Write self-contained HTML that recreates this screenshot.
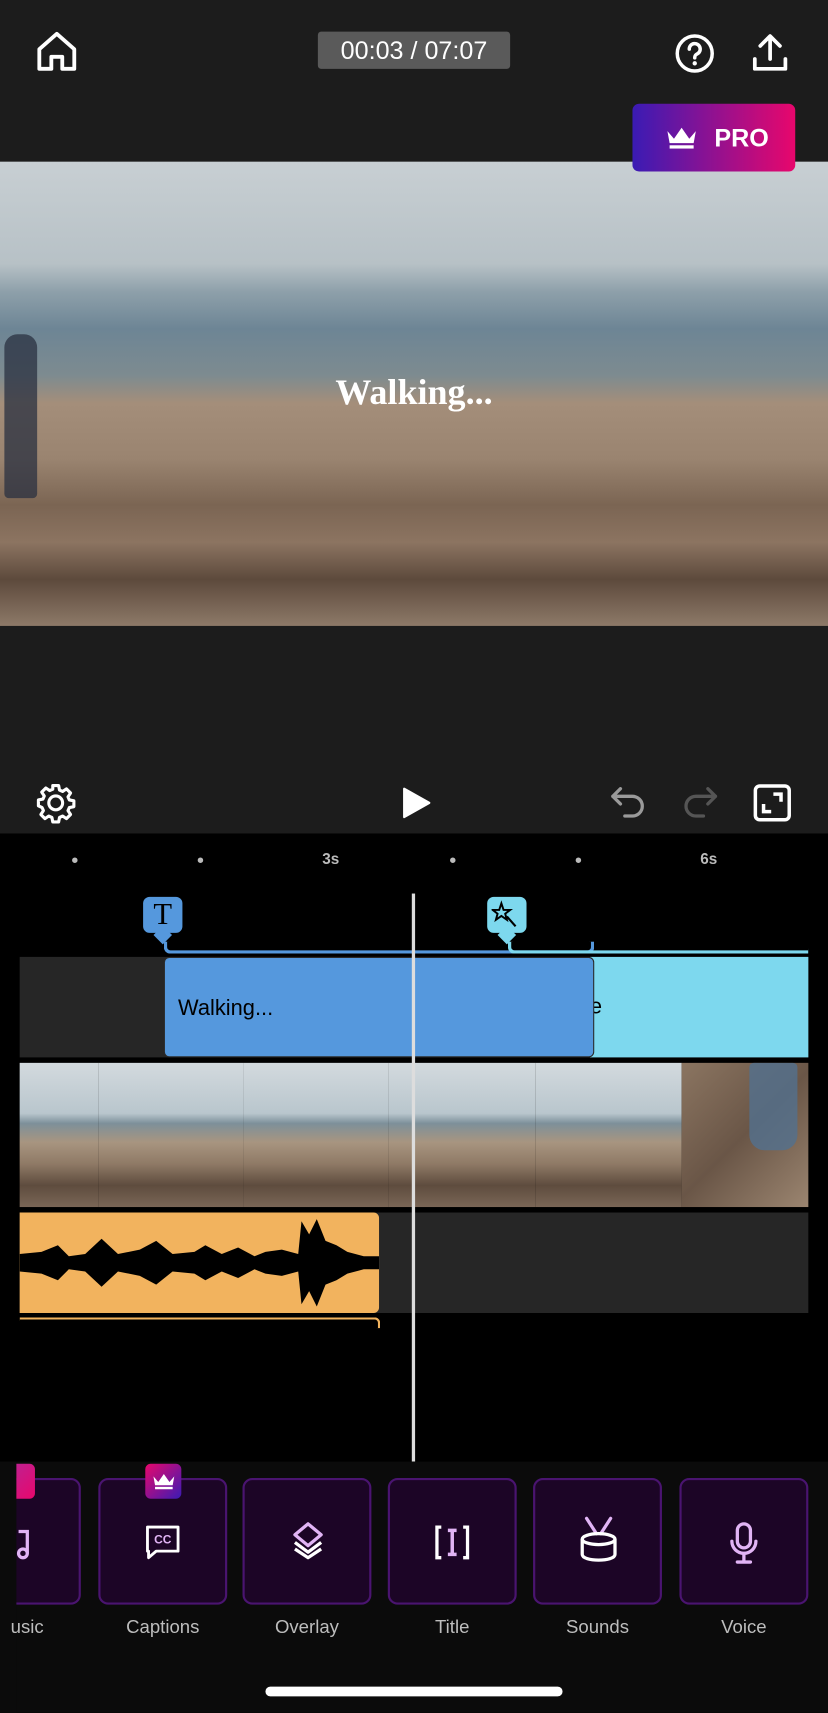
<!DOCTYPE html>
<html><head><meta charset="utf-8"><style>
*{margin:0;padding:0;box-sizing:border-box}
html,body{width:828px;height:1713px;overflow:hidden;background:#000}
#w{width:758px;height:1568px;transform:scale(1.09235);transform-origin:0 0;position:relative;background:#000;font-family:"Liberation Sans",sans-serif}
.a{position:absolute}
.tile{position:absolute;top:1353px;width:118px;height:116px;background:#1c0526;border:2px solid #4a1470;border-radius:9px}
.lbl{position:absolute;top:1480px;width:118px;text-align:center;color:#bdbdbd;font-size:17px}
.frame{position:absolute;top:973px;height:132px;background:linear-gradient(#d3dade 0%,#b9c6cd 35%,#7d909a 42%,#a89580 55%,#8f7a66 70%,#5e4c3e 85%,#7a6656 100%)}
</style></head><body><div id="w">
<div class="a" style="left:0;top:0;width:758px;height:763px;background:#1c1c1c"></div>
<svg class="a" style="left:32px;top:28px" width="40" height="38" viewBox="0 0 40 38"><path d="M4 17 L20 3 L36 17 V35 H25 V24 H15 V35 H4 Z" fill="none" stroke="#fff" stroke-width="3.5" stroke-linejoin="round"/></svg>
<div class="a" style="left:291px;top:29px;width:176px;height:34px;background:#5a5a5a;border-radius:3px;color:#fff;font-size:23px;text-align:center;line-height:34px">00:03 / 07:07</div>
<svg class="a" style="left:617px;top:30px" width="38" height="38" viewBox="0 0 38 38"><circle cx="19" cy="19" r="16" fill="none" stroke="#fff" stroke-width="3.2"/><path d="M14 15 a5 5 0 1 1 7 4.5 c-1.5 .8-2 1.5-2 3.5" fill="none" stroke="#fff" stroke-width="3.2" stroke-linecap="round"/><circle cx="19" cy="28" r="2" fill="#fff"/></svg>
<svg class="a" style="left:688px;top:30px" width="34" height="36" viewBox="0 0 34 36"><path d="M17 24 V4 M8 12 L17 3 L26 12 M3 24 V33 H31 V24" fill="none" stroke="#fff" stroke-width="3.4" stroke-linecap="round" stroke-linejoin="round"/></svg>
<!-- video -->
<div class="a" style="left:0;top:148px;width:758px;height:425px;background:linear-gradient(#c8cfd3 0%,#b7c1c6 22%,#8ea0aa 28%,#6d8595 36%,#7d8b90 46%,#a48e7a 52%,#9a8470 64%,#7b6553 74%,#8c7461 82%,#5d4a3c 90%,#8d7968 100%)"></div>
<div class="a" style="left:4px;top:306px;width:30px;height:150px;background:#2a3040;border-radius:12px 12px 4px 4px;opacity:.75"></div>
<div class="a" style="left:0;top:342px;width:758px;text-align:center;color:#fff;font-family:'Liberation Serif',serif;font-size:33px;font-weight:bold">Walking...</div>
<div class="a" style="left:579px;top:95px;width:149px;height:62px;border-radius:6px;background:linear-gradient(90deg,#3a1bb4,#e8076c);color:#fff;font-weight:bold;font-size:23px;line-height:62px;padding-left:75px">PRO</div>
<svg class="a" style="left:609px;top:114px" width="30" height="24" viewBox="0 0 30 24"><path d="M2 6 L8 13 L15 3 L22 13 L28 6 L26 17 H4 Z" fill="#fff"/><rect x="4" y="19" width="22" height="3" fill="#fff"/></svg>
<!-- controls -->
<svg class="a" style="left:32px;top:716px" width="38" height="38" viewBox="0 0 24 24"><path d="M12 8a4 4 0 1 0 0 8a4 4 0 0 0 0-8z M10.3 2h3.4l.5 2.6 1.8.8 2.2-1.5 2.4 2.4-1.5 2.2.8 1.8 2.6.5v3.4l-2.6.5-.8 1.8 1.5 2.2-2.4 2.4-2.2-1.5-1.8.8-.5 2.6h-3.4l-.5-2.6-1.8-.8-2.2 1.5-2.4-2.4 1.5-2.2-.8-1.8L2 13.7v-3.4l2.6-.5.8-1.8-1.5-2.2 2.4-2.4 2.2 1.5 1.8-.8z" fill="none" stroke="#fff" stroke-width="1.8" stroke-linejoin="round"/></svg>
<svg class="a" style="left:367px;top:720px" width="28" height="30" viewBox="0 0 28 30"><path d="M3 2 L26 15 L3 28 Z" fill="#fff" stroke="#fff" stroke-width="2" stroke-linejoin="round"/></svg>
<svg class="a" style="left:558px;top:718px" width="34" height="32" viewBox="0 0 34 32"><path d="M10 4 L3 11 L10 18 M3 11 H21 a9 9 0 0 1 0 18 H14" fill="none" stroke="#9a9a9a" stroke-width="3" stroke-linecap="round" stroke-linejoin="round"/></svg>
<svg class="a" style="left:624px;top:718px" width="34" height="32" viewBox="0 0 34 32"><path d="M24 4 L31 11 L24 18 M31 11 H13 a9 9 0 0 0 0 18 H20" fill="none" stroke="#555" stroke-width="3" stroke-linecap="round" stroke-linejoin="round"/></svg>
<svg class="a" style="left:689px;top:717px" width="36" height="36" viewBox="0 0 36 36"><rect x="2.5" y="2.5" width="31" height="31" rx="4" fill="none" stroke="#fff" stroke-width="3.2"/><path d="M19 10 H26 V17 M17 26 H10 V19" fill="none" stroke="#fff" stroke-width="3.2"/></svg>
<!-- ruler -->
<div class="a" style="left:66px;top:785px;width:5px;height:5px;border-radius:50%;background:#bbb"></div>
<div class="a" style="left:181px;top:785px;width:5px;height:5px;border-radius:50%;background:#bbb"></div>
<div class="a" style="left:412px;top:785px;width:5px;height:5px;border-radius:50%;background:#bbb"></div>
<div class="a" style="left:527px;top:785px;width:5px;height:5px;border-radius:50%;background:#bbb"></div>
<div class="a" style="left:295px;top:778px;color:#bbb;font-size:14px;font-weight:bold">3s</div>
<div class="a" style="left:641px;top:778px;color:#bbb;font-size:14px;font-weight:bold">6s</div>
<!-- markers -->
<div class="a" style="left:131px;top:821px;width:36px;height:33px;background:#5598dd;border-radius:6px"></div>
<div class="a" style="left:143px;top:850px;width:12px;height:12px;background:#5598dd;transform:rotate(45deg)"></div>
<div class="a" style="left:131px;top:822px;width:36px;text-align:center;font-family:'Liberation Serif',serif;font-size:28px;color:#000">T</div>
<div class="a" style="left:446px;top:821px;width:36px;height:33px;background:#7dd8ee;border-radius:6px"></div>
<div class="a" style="left:458px;top:850px;width:12px;height:12px;background:#7dd8ee;transform:rotate(45deg)"></div>
<svg class="a" style="left:450px;top:824px" width="30" height="30" viewBox="0 0 30 30"><path d="M9 3 L11 9 L17 9 L12.5 12.5 L14 18 L9 14.5 L4 18 L5.5 12.5 L1 9 L7 9 Z" fill="none" stroke="#000" stroke-width="1.8"/><path d="M14 15 L22 24" stroke="#000" stroke-width="2"/></svg>
<div class="a" style="left:150px;top:862px;width:394px;height:11px;border:3px solid #5598dd;border-top:none;border-radius:0 0 6px 6px"></div>
<div class="a" style="left:465px;top:862px;width:275px;height:11px;border-left:3px solid #7dd8ee;border-bottom:3px solid #7dd8ee;border-radius:0 0 0 6px"></div>
<!-- text track -->
<div class="a" style="left:18px;top:876px;width:722px;height:92px;background:#262626"></div>
<div class="a" style="left:540px;top:876px;width:200px;height:92px;background:#7dd8ee;color:#000;font-size:20px;line-height:92px">e</div>
<div class="a" style="left:150px;top:876px;width:394px;height:92px;background:#5598dd;border:1.5px solid #2a2a2a;border-radius:5px;color:#000;font-size:20px;line-height:92px;padding-left:12px">Walking...</div>
<!-- filmstrip -->
<div class="frame" style="left:18px;width:72px"></div>
<div class="frame" style="left:90px;width:133px"></div>
<div class="frame" style="left:223px;width:133px"></div>
<div class="frame" style="left:356px;width:134px"></div>
<div class="frame" style="left:490px;width:134px"></div>
<div class="a" style="left:624px;top:973px;width:116px;height:132px;background:linear-gradient(135deg,#8b7561,#6a5647 50%,#9b8570)"></div>
<div class="a" style="left:686px;top:973px;width:44px;height:80px;background:#53708f;border-radius:4px 4px 14px 14px;opacity:.8"></div>
<!-- audio -->
<div class="a" style="left:18px;top:1110px;width:722px;height:92px;background:#262626"></div>
<div class="a" style="left:18px;top:1110px;width:329px;height:92px;background:#f2b35e;border-radius:0 5px 5px 0"></div>
<svg class="a" style="left:18px;top:1110px" width="329" height="92" viewBox="0 0 329 92"><path d="M0 38 L20 36 L35 30 L45 40 L60 38 L75 24 L90 38 L110 34 L125 26 L140 38 L160 36 L170 30 L185 38 L200 32 L215 40 L225 36 L240 34 L255 38 L258 8 L265 20 L272 6 L280 26 L290 30 L300 36 L315 40 L329 40 L329 52 L315 52 L300 56 L290 62 L280 66 L272 86 L265 72 L258 84 L255 54 L240 58 L225 56 L215 52 L200 60 L185 54 L170 62 L160 56 L140 54 L125 66 L110 58 L90 54 L75 68 L60 54 L45 52 L35 62 L20 56 L0 54 Z" fill="#000"/></svg>
<div class="a" style="left:18px;top:1206px;width:330px;height:10px;border-top:2px solid #f2b35e;border-right:2px solid #f2b35e;border-radius:0 5px 0 0"></div>
<div class="a" style="left:377px;top:818px;width:3px;height:520px;background:#ddd"></div>
<!-- bottom toolbar -->
<div class="a" style="left:0;top:1338px;width:758px;height:230px;background:#0b0b0b"></div>
<div class="tile" style="left:-44px"></div>
<div class="tile" style="left:90px"></div>
<div class="tile" style="left:222px"></div>
<div class="tile" style="left:355px"></div>
<div class="tile" style="left:488px"></div>
<div class="tile" style="left:622px"></div>
<div class="a" style="left:0;top:1338px;width:15px;height:230px;background:#0b0b0b"></div>
<div class="a" style="left:15px;top:1340px;width:17px;height:32px;background:linear-gradient(135deg,#c0208f,#e8076c);border-radius:0 5px 5px 0"></div>
<div class="a" style="left:133px;top:1340px;width:33px;height:32px;background:linear-gradient(135deg,#e8076c,#3a1bb4);border-radius:5px"></div>
<svg class="a" style="left:139px;top:1346px" width="22" height="20" viewBox="0 0 30 24"><path d="M2 6 L8 13 L15 3 L22 13 L28 6 L26 17 H4 Z" fill="#fff"/><rect x="4" y="19" width="22" height="3" fill="#fff"/></svg>
<svg class="a" style="left:15px;top:1400px" width="14" height="28" viewBox="0 0 14 28"><path d="M2 2 H10 V22" fill="none" stroke="#e1b4f5" stroke-width="3"/><circle cx="6" cy="22" r="4" fill="none" stroke="#e1b4f5" stroke-width="3"/></svg>
<svg class="a" style="left:131px;top:1394px" width="36" height="36" viewBox="0 0 36 36"><path d="M4 4 H32 V26 H12 L5 32 V26 H4 Z" fill="none" stroke="#fff" stroke-width="2.6" stroke-linejoin="round"/><text x="18" y="19" font-family="Liberation Sans" font-size="11" font-weight="bold" fill="#e1b4f5" text-anchor="middle">CC</text></svg>
<svg class="a" style="left:264px;top:1392px" width="36" height="36" viewBox="0 0 36 36"><path d="M18 3 L30 13 L18 23 L6 13 Z" fill="none" stroke="#e1b4f5" stroke-width="3" stroke-linejoin="round"/><path d="M6 20 L18 29 L30 20 M6 26 L18 34 L30 26" fill="none" stroke="#fff" stroke-width="3" stroke-linejoin="round"/></svg>
<svg class="a" style="left:396px;top:1395px" width="36" height="34" viewBox="0 0 36 34"><path d="M8 3 H4 V31 H8 M28 3 H32 V31 H28" fill="none" stroke="#fff" stroke-width="3"/><path d="M14 6 H22 M18 6 V28 M14 28 H22" fill="none" stroke="#e1b4f5" stroke-width="3.2"/></svg>
<svg class="a" style="left:529px;top:1388px" width="38" height="44" viewBox="0 0 38 44"><path d="M8 2 L17 16 M30 2 L21 16" stroke="#e1b4f5" stroke-width="3" stroke-linecap="round"/><ellipse cx="19" cy="21" rx="15" ry="5" fill="none" stroke="#fff" stroke-width="3"/><path d="M4 21 V35 C4 42 34 42 34 35 V21" fill="none" stroke="#fff" stroke-width="3"/></svg>
<svg class="a" style="left:667px;top:1393px" width="28" height="40" viewBox="0 0 28 40"><rect x="8" y="2" width="12" height="22" rx="6" fill="none" stroke="#e1b4f5" stroke-width="3"/><path d="M3 18 a11 11 0 0 0 22 0 M14 29 V36 M8 37 H20" fill="none" stroke="#e1b4f5" stroke-width="3" stroke-linecap="round"/></svg>
<div class="lbl" style="left:-60px;width:100px;text-align:right">usic</div>
<div class="lbl" style="left:90px">Captions</div>
<div class="lbl" style="left:222px">Overlay</div>
<div class="lbl" style="left:355px">Title</div>
<div class="lbl" style="left:488px">Sounds</div>
<div class="lbl" style="left:622px">Voice</div>
<div class="a" style="left:243px;top:1544px;width:272px;height:9px;border-radius:5px;background:#fff"></div>
</div></body></html>
